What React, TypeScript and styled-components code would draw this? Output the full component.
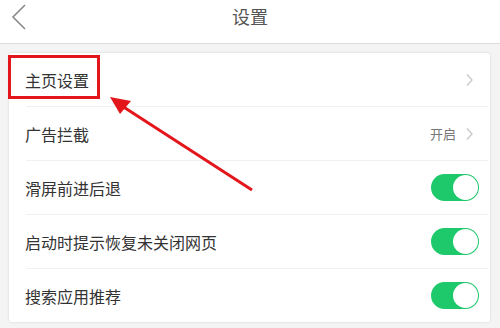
import styled, { createGlobalStyle } from "styled-components"

const GlobalStyle = createGlobalStyle`
  html, body {
    margin: 0;
    padding: 0;
    background: #f4f4f4;
    font-family: "Noto Sans CJK SC", "Noto Sans", sans-serif;
  }
`

const Page = styled.div`
  position: relative;
  width: 500px;
  height: 328px;
  overflow: hidden;
  background: #f4f4f4;
`

const Header = styled.header`
  height: 43px;
  background: #fff;
  border-bottom: 1px solid #dcdcdc;
  display: flex;
  align-items: center;
  justify-content: center;
  position: relative;
`

const BackButton = styled.div`
  position: absolute;
  left: 10px;
  top: 3px;
  width: 18px;
  height: 28px;
`

const Title = styled.h1`
  margin: 0 0 11px 0;
  font-size: 18px;
  font-weight: 400;
  color: #555;
`

const Body = styled.main`
  padding: 9px 10px 0 9px;
`

const Card = styled.section`
  background: #fff;
  border-radius: 3px;
  box-shadow: 0 0 3px rgba(0, 0, 0, 0.12);
`

const Row = styled.div`
  height: 53px;
  display: flex;
  align-items: center;
  justify-content: space-between;
  padding: 0 11px 0 16px;
`

const Divider = styled.div`
  height: 1px;
  margin-left: 17px;
  margin-right: 2px;
  background: #f0f0f0;
`

const Label = styled.span<{ $boxed?: boolean }>`
  font-size: 16px;
  color: #333;
  position: relative;
  ${(p) =>
    p.$boxed &&
    `
    &::before {
      content: "";
      position: absolute;
      left: -17px;
      top: -13px;
      width: 86px;
      height: 38px;
      border: 3px solid #e3161c;
    }
  `}
`

const Right = styled.div`
  display: flex;
  align-items: center;
  gap: 7px;
`

const Value = styled.span`
  font-size: 13px;
  color: #777;
`

const Chevron = styled.div`
  width: 12px;
  height: 14px;
  display: flex;
  margin-right: 4px;
`

const Toggle = styled.div`
  width: 48px;
  height: 27px;
  border-radius: 14px;
  background: #1ec96b;
  display: flex;
  justify-content: flex-end;
  align-items: center;
  padding: 0 1px;
  box-sizing: border-box;
`

const Knob = styled.div`
  width: 25px;
  height: 25px;
  border-radius: 50%;
  background: #fff;
`

const ArrowLayer = styled.svg`
  position: absolute;
  left: 0;
  top: 0;
  pointer-events: none;
`

const ChevronIcon = () => (
  <svg width="12" height="14" viewBox="0 0 12 14">
    <path d="M4 1.5 L9 7 L4 12.5" fill="none" stroke="#c8c8c8" strokeWidth="1.3" />
  </svg>
)

type Item = {
  label: string
  kind: "link" | "toggle"
  value?: string
  boxed?: boolean
}

const items: Item[] = [
  { label: "主页设置", kind: "link", boxed: true },
  { label: "广告拦截", kind: "link", value: "开启" },
  { label: "滑屏前进后退", kind: "toggle" },
  { label: "启动时提示恢复未关闭网页", kind: "toggle" },
  { label: "搜索应用推荐", kind: "toggle" },
]

export default function App() {
  return (
    <Page>
      <GlobalStyle />
      <Header>
        <BackButton>
          <svg width="18" height="28" viewBox="0 0 18 28">
            <path d="M15 2 L3 14 L15 26" fill="none" stroke="#8a8a8a" strokeWidth="1.6" />
          </svg>
        </BackButton>
        <Title>设置</Title>
      </Header>
      <Body>
        <Card>
          {items.map((item, i) => (
            <div key={item.label}>
              {i > 0 && <Divider />}
              <Row>
                <Label $boxed={item.boxed}>{item.label}</Label>
                <Right>
                  {item.value && <Value>{item.value}</Value>}
                  {item.kind === "link" ? (
                    <Chevron>
                      <ChevronIcon />
                    </Chevron>
                  ) : (
                    <Toggle>
                      <Knob />
                    </Toggle>
                  )}
                </Right>
              </Row>
            </div>
          ))}
        </Card>
      </Body>
      <ArrowLayer width="500" height="328" viewBox="0 0 500 328">
        <line x1="252" y1="190" x2="122" y2="106" stroke="#e3161c" strokeWidth="3" />
        <polygon points="110,97 131,101 120,114" fill="#e3161c" />
      </ArrowLayer>
    </Page>
  )
}
